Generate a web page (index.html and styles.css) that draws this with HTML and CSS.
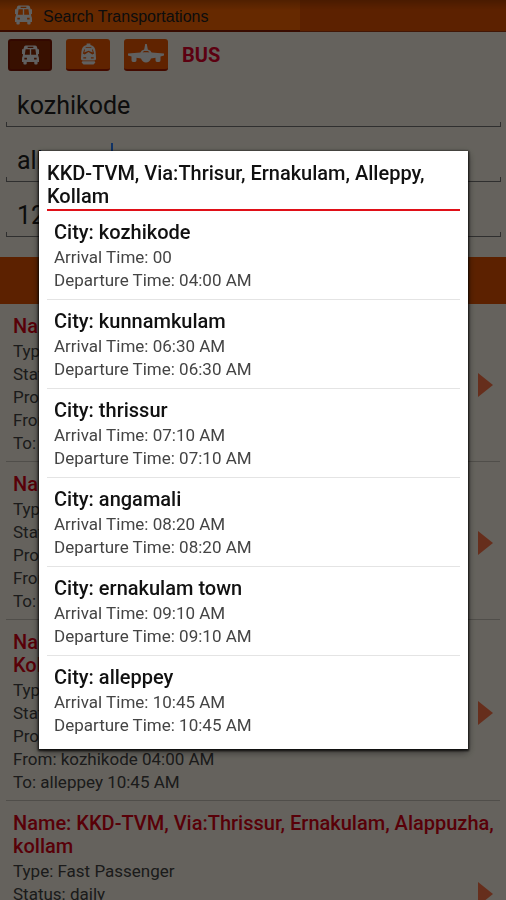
FILE: index.html
```html
<!DOCTYPE html>
<html lang="en">
<head>
<meta charset="utf-8">
<meta name="viewport" content="width=device-width, initial-scale=1">
<title>Search Transportations</title>
<link rel="stylesheet" href="styles.css">
</head>
<body>
<svg class="sprite" aria-hidden="true">
  <symbol id="bus" viewBox="0 0 18 20">
    <path fill="currentColor" fill-rule="evenodd" d="M4 0h10q1.800 0 2 2l.6 2H18v5h-1l.2 2q.8 1 .8 3v3.500h-1.500V19q0 1-1 1h-1.500q-1 0-1-1v-1.500H5V19q0 1-1 1H2.500q-1 0-1-1v-1.500H0V14q0-2 .8-3L1 9H0V4h1.400L2 2q.2-2 2-2zM6 1.300v1.200h6V1.300zM3.800 4 3 9.800h5.300V4zM9.700 4v5.800H15L14.200 4zM2.500 13v1.800h2.700V13zM12.800 13v1.800h2.700V13z"/>
  </symbol>
  <symbol id="train" viewBox="0 0 18 22">
    <path fill="currentColor" fill-rule="evenodd" d="M7 0h4v1.500q5 1 5.500 7L17 16q0 1.500-2 2H3q-2-.5-2-2l.5-7.500q.5-6 5.500-7zM6 3.500v1h6v-1zM4.500 6 3 10.500l2 1L9 9l4 2.500 2-1L13.500 6l-.8.500.8 3L9 7.500 4.500 9.500l.8-3zM3.500 14.500v1.200h3v-1.200zM11.500 14.500v1.200h3v-1.200z"/>
    <path fill="currentColor" d="M2.500 18.800h13l.8 1.200-2 2H3.700l-2-2z"/>
  </symbol>
  <symbol id="plane" viewBox="0 0 36 20">
    <path fill="currentColor" d="M17.200 0h1.600l1 5.500q2.800.6 3.800 3L36 9.600v2l-3.500 1v3.600q0 1.800-1.500 1.800h-2q-1.500 0-1.500-1.800v-2.400l-4.500.7q-1.500 4-5 4t-5-4l-4.500-.7v2.400Q8.500 18 7 18H5q-1.500 0-1.500-1.800v-3.600L0 11.600v-2l12.400-1.100q1-2.400 3.800-3z"/>
    <path class="window" d="M14.500 8.500 16 7h4l1.500 1.500-1.500-.3h-4z"/>
  </symbol>
  <symbol id="arrow" viewBox="0 0 15 24">
    <path fill="currentColor" d="M0 0l15 12L0 24z"/>
  </symbol>
</svg>

<header class="topbar">
  <div class="brand">
    <svg class="brand-icon"><use href="#bus"/></svg>
    <h1>Search Transportations</h1>
  </div>
</header>

<main>
  <form class="search">
    <div class="modes">
      <button type="button" class="mode active" aria-label="Bus"><svg class="bus"><use href="#bus"/></svg></button>
      <button type="button" class="mode" aria-label="Train"><svg class="train"><use href="#train"/></svg></button>
      <button type="button" class="mode" aria-label="Flight"><svg class="plane"><use href="#plane"/></svg></button>
      <span class="mode-name">BUS</span>
    </div>
    <div class="field"><input type="text" aria-label="From" value="kozhikode"></div>
    <div class="field editing"><input type="text" aria-label="To" value="alleppey"></div>
    <div class="field"><input type="text" aria-label="Time" value="12:00"></div>
    <button type="button" class="submit" aria-label="Search"></button>
  </form>

  <ul class="results">
    <li>
      <div class="info">
        <h2>Name: KKD-TVM</h2>
        <p>Type: Fast Passenger</p><p>Status: daily</p><p>Provider: KSRTC</p><p>From: kozhikode</p><p>To: alleppey</p>
      </div>
      <svg class="arrow"><use href="#arrow"/></svg>
    </li>
    <li>
      <div class="info">
        <h2>Name: KKD-TVM</h2>
        <p>Type: Fast Passenger</p><p>Status: daily</p><p>Provider: KSRTC</p><p>From: kozhikode</p><p>To: alleppey</p>
      </div>
      <svg class="arrow"><use href="#arrow"/></svg>
    </li>
    <li>
      <div class="info">
        <h2>Name: KKD-TVM, Via:Thrisur, Ernakulam, Alleppy, Kollam</h2>
        <p>Type: Fast Passenger</p><p>Status: daily</p><p>Provider: KSRTC</p><p>From: kozhikode 04:00 AM</p><p>To: alleppey 10:45 AM</p>
      </div>
      <svg class="arrow"><use href="#arrow"/></svg>
    </li>
    <li>
      <div class="info">
        <h2>Name: KKD-TVM, Via:Thrissur, Ernakulam, Alappuzha, kollam</h2>
        <p>Type: Fast Passenger</p><p>Status: daily</p><p>Provider: KSRTC</p><p>From: kozhikode</p><p>To: alleppey</p>
      </div>
      <svg class="arrow"><use href="#arrow"/></svg>
    </li>
  </ul>
</main>

<div class="scrim">
  <section class="dialog" role="dialog" aria-modal="true" aria-labelledby="route">
    <h2 id="route">KKD-TVM, Via:Thrisur, Ernakulam, Alleppy, Kollam</h2>
    <ul class="stops">
      <li><h3>City: kozhikode</h3><p>Arrival Time: 00</p><p>Departure Time: 04:00 AM</p></li>
      <li><h3>City: kunnamkulam</h3><p>Arrival Time: 06:30 AM</p><p>Departure Time: 06:30 AM</p></li>
      <li><h3>City: thrissur</h3><p>Arrival Time: 07:10 AM</p><p>Departure Time: 07:10 AM</p></li>
      <li><h3>City: angamali</h3><p>Arrival Time: 08:20 AM</p><p>Departure Time: 08:20 AM</p></li>
      <li><h3>City: ernakulam town</h3><p>Arrival Time: 09:10 AM</p><p>Departure Time: 09:10 AM</p></li>
      <li><h3>City: alleppey</h3><p>Arrival Time: 10:45 AM</p><p>Departure Time: 10:45 AM</p></li>
    </ul>
  </section>
</div>
</body>
</html>
```

FILE: styles.css
```css
* { box-sizing: border-box; margin: 0; padding: 0; }

body {
  height: 100vh;
  overflow: hidden;
  background: #fcf6e8;
  color: #222;
  font: 17px/23px Roboto, sans-serif;
}

ul { list-style: none; }
svg { display: block; flex: none; }
.sprite { position: absolute; width: 0; height: 0; }

/* Title bar */
.topbar {
  height: 32px;
  background: linear-gradient(#b84400, #e65400 10px);
  border-bottom: 1px solid #a53a10;
}
.brand {
  display: flex;
  align-items: center;
  gap: 11px;
  width: 300px;
  height: 32px;
  padding-left: 15px;
  background: linear-gradient(#c85000, #ff6600 10px);
  border-bottom: 2px solid #8c1c00;
}
.brand-icon { width: 17px; height: 20px; color: #f0f0f0; }
.brand h1 { padding-top: 3px; font: 16px/20px "Liberation Sans", sans-serif; color: #222; }

/* Search form */
.modes {
  display: flex;
  align-items: center;
  gap: 14px;
  padding: 7px 8px 1px;
}
.mode {
  display: flex;
  align-items: center;
  justify-content: center;
  width: 44px;
  height: 32px;
  border: 0;
  border-bottom: 2px solid #a81c00;
  border-radius: 3px;
  background: #f05800;
  color: #f0f0f0;
}
.mode.active { background: #8c2800; border: 2px solid #801400; }
.mode .bus { width: 17px; height: 20px; }
.mode .train { width: 17px; height: 22px; }
.mode .plane { width: 36px; height: 20px; }
.window { fill: #f05800; }
.mode-name { font-size: 20px; font-weight: 700; color: #e6002c; }

.field {
  height: 55px;
  padding: 0 5px 0 6px;
}
.field input {
  width: 100%;
  height: 55px;
  padding: 12px 11px 0;
  border: 0;
  outline: 0;
  color: #222;
  font: 25px/30px Roboto, sans-serif;
  background:
    linear-gradient(#777, #777) 0 100% / 100% 1px no-repeat,
    linear-gradient(#777, #777) 0 100% / 1px 5px no-repeat,
    linear-gradient(#777, #777) 100% 100% / 1px 5px no-repeat;
}
.editing { position: relative; }
.editing::after {
  content: "";
  position: absolute;
  left: 111px;
  top: 16px;
  width: 2px;
  height: 30px;
  background: #2a7fff;
}
.submit {
  display: block;
  width: 100%;
  height: 47px;
  margin-top: 20px;
  border: 0;
  background: #e65400;
}

/* Result list */
.results li {
  display: flex;
  align-items: center;
  margin: 0 6px;
  padding: 11px 0 6px 7px;
  border-bottom: 1px solid #c8c3b8;
}
.info { flex: 1; }
.info h2 { margin-bottom: 2px; font-size: 20px; font-weight: 500; line-height: 23px; color: #dc0014; }
.info p { color: #444; }
.results .arrow { width: 15px; height: 24px; margin: 0 7px 0 -22px; color: #ff7448; }

/* Route dialog */
.scrim {
  position: fixed;
  inset: 0;
  display: flex;
  align-items: center;
  padding: 0 38px 0 39px;
  background: rgba(0, 0, 0, 0.6);
}
.dialog {
  flex: 1;
  padding: 11px 8px 5px;
  background: #fff;
  box-shadow: 0 1px 2px 1px rgba(0, 0, 0, 0.8), 0 3px 8px rgba(0, 0, 0, 0.5);
}
.dialog h2 {
  padding-bottom: 1px;
  border-bottom: 2px solid #e01018;
  color: #111;
  font-size: 20px;
  font-weight: 500;
  line-height: 23px;
}
.stops li { padding: 9px 7px 7px; border-bottom: 1px solid #e4e4e4; }
.stops li:last-child { border-bottom: 0; }
.stops h3 { margin-bottom: 2px; color: #111; font-size: 20px; font-weight: 500; line-height: 24px; }
.stops p { color: #444; }
```
